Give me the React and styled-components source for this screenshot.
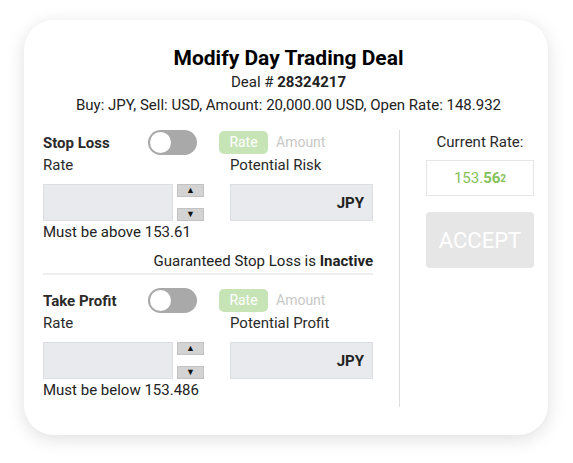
import React from 'react';
import styled, { createGlobalStyle } from 'styled-components';

const Global = createGlobalStyle`
  html, body { margin: 0; padding: 0; background: #fff; }
  body { font-family: Roboto, "Liberation Sans", Arial, sans-serif; color: #333; }
`;

const Page = styled.div`
  width: 573px;
  height: 463px;
  padding-top: 20px;
  box-sizing: border-box;
`;

const Card = styled.div`
  width: 524px;
  height: 415px;
  margin-left: 24px;
  box-sizing: border-box;
  padding: 26px 14px 0 19px;
  background: #fff;
  border-radius: 30px;
  box-shadow: 0 4px 18px rgba(0, 0, 0, 0.13);
`;

const Title = styled.h1`
  margin: 0;
  font-size: 21px;
  line-height: 24px;
  font-weight: 700;
  color: #000;
  text-align: center;
`;

const Sub = styled.div`
  margin-top: ${p => p.$mt || 0}px;
  font-size: 15px;
  line-height: 20px;
  color: #222;
  text-align: center;
  b { font-weight: 700; }
`;

const Main = styled.div`
  margin-top: 15px;
  display: grid;
  grid-template-columns: 330px 1px 108px;
  column-gap: 26px;
`;

const Divider = styled.div`
  height: 277px;
  background: #ddd;
`;

const Left = styled.div`
  display: flex;
  flex-direction: column;
`;

const Section = styled.div`
  display: grid;
  grid-template-columns: 161px 143px;
  column-gap: 26px;
`;

const Header = styled.div`
  grid-column: 1 / -1;
  height: 25px;
  display: flex;
  align-items: center;
`;

const SectionName = styled.div`
  width: 105px;
  font-size: 15px;
  font-weight: 700;
  color: #2a2a2a;
`;

const Toggle = styled.div`
  width: 49px;
  height: 25px;
  border-radius: 13px;
  background: #a9a9a9;
  box-sizing: border-box;
  padding: 2px;
  &::before {
    content: "";
    display: block;
    width: 21px;
    height: 21px;
    border-radius: 50%;
    background: #fff;
  }
`;

const Pill = styled.div`
  margin-left: 22px;
  width: 49px;
  height: 23px;
  border-radius: 5px;
  background: ${p => (p.$active ? '#c6e4b6' : 'transparent')};
  color: ${p => (p.$active ? '#fff' : '#c8c8c8')};
  font-size: 14px;
  line-height: 23px;
  text-align: center;
  & + & {
    margin-left: 4px;
    width: auto;
    padding: 0 4px;
  }
`;

const Label = styled.div`
  font-size: 15px;
  line-height: 20px;
  color: #2a2a2a;
`;

const InputRow = styled.div`
  margin-top: 9px;
  display: flex;
  gap: 4px;
  height: 37px;
`;

const Field = styled.div`
  flex: 0 0 130px;
  box-sizing: border-box;
  background: #e8eaed;
  border: 1px solid #dcdfe2;
`;

const Spinner = styled.div`
  display: flex;
  flex-direction: column;
  justify-content: space-between;
  width: 27px;
`;

const SpinBtn = styled.div`
  height: 13px;
  background: #d3d3d3;
  border: 1px solid #c2c2c2;
  box-sizing: border-box;
  display: flex;
  align-items: center;
  justify-content: center;
  font-size: 9px;
  line-height: 1;
  color: #111;
`;

const CurrencyBox = styled.div`
  margin-top: 9px;
  height: 37px;
  box-sizing: border-box;
  background: #e8eaed;
  border: 1px solid #dcdfe2;
  display: flex;
  align-items: center;
  justify-content: flex-end;
  padding-right: 8px;
  font-size: 15px;
  font-weight: 700;
  color: #222;
`;

const Hint = styled.div`
  grid-column: 1 / -1;
  margin-top: 1px;
  font-size: 15px;
  line-height: 20px;
  color: #222;
`;

const Guarantee = styled.div`
  margin-top: 9px;
  padding-bottom: 2px;
  border-bottom: 2px solid #eee;
  margin-bottom: 13px;
  font-size: 15px;
  line-height: 20px;
  text-align: right;
  color: #222;
  b { font-weight: 700; }
`;

const Right = styled.div`
  display: flex;
  flex-direction: column;
  align-items: stretch;
`;

const RateTitle = styled.div`
  height: 25px;
  font-size: 15px;
  line-height: 25px;
  text-align: center;
  color: #2a2a2a;
`;

const RateBox = styled.div`
  margin-top: 5px;
  height: 36px;
  box-sizing: border-box;
  border: 1px solid #e6e6e6;
  display: flex;
  align-items: center;
  justify-content: center;
  color: #86c15a;
  font-size: 15px;
  b { font-weight: 700; }
  sub { font-size: 10px; font-weight: 700; vertical-align: -1px; }
`;

const Accept = styled.button`
  margin-top: 16px;
  height: 56px;
  border: none;
  border-radius: 4px;
  background: #e6e6e6;
  color: #fff;
  font-family: Roboto, "Liberation Sans", Arial, sans-serif;
  font-size: 22px;
  padding: 0;
`;

const TradeSection = ({ name, valueLabel, hint }) => (
  <Section>
    <Header>
      <SectionName>{name}</SectionName>
      <Toggle />
      <Pill $active>Rate</Pill>
      <Pill>Amount</Pill>
    </Header>
    <Label>Rate</Label>
    <Label>{valueLabel}</Label>
    <InputRow>
      <Field />
      <Spinner>
        <SpinBtn>▲</SpinBtn>
        <SpinBtn>▼</SpinBtn>
      </Spinner>
    </InputRow>
    <CurrencyBox>JPY</CurrencyBox>
    <Hint>{hint}</Hint>
  </Section>
);

export default function App() {
  return (
    <Page>
      <Global />
      <Card>
        <Title>Modify Day Trading Deal</Title>
        <Sub $mt={2}>Deal # <b>28324217</b></Sub>
        <Sub $mt={3}>Buy: JPY, Sell: USD, Amount: 20,000.00 USD, Open Rate: 148.932</Sub>
        <Main>
          <Left>
            <TradeSection name="Stop Loss" valueLabel="Potential Risk" hint="Must be above 153.61" />
            <Guarantee>Guaranteed Stop Loss is <b>Inactive</b></Guarantee>
            <TradeSection name="Take Profit" valueLabel="Potential Profit" hint="Must be below 153.486" />
          </Left>
          <Divider />
          <Right>
            <RateTitle>Current Rate:</RateTitle>
            <RateBox>153.<b>56</b><sub>2</sub></RateBox>
            <Accept>ACCEPT</Accept>
          </Right>
        </Main>
      </Card>
    </Page>
  );
}
